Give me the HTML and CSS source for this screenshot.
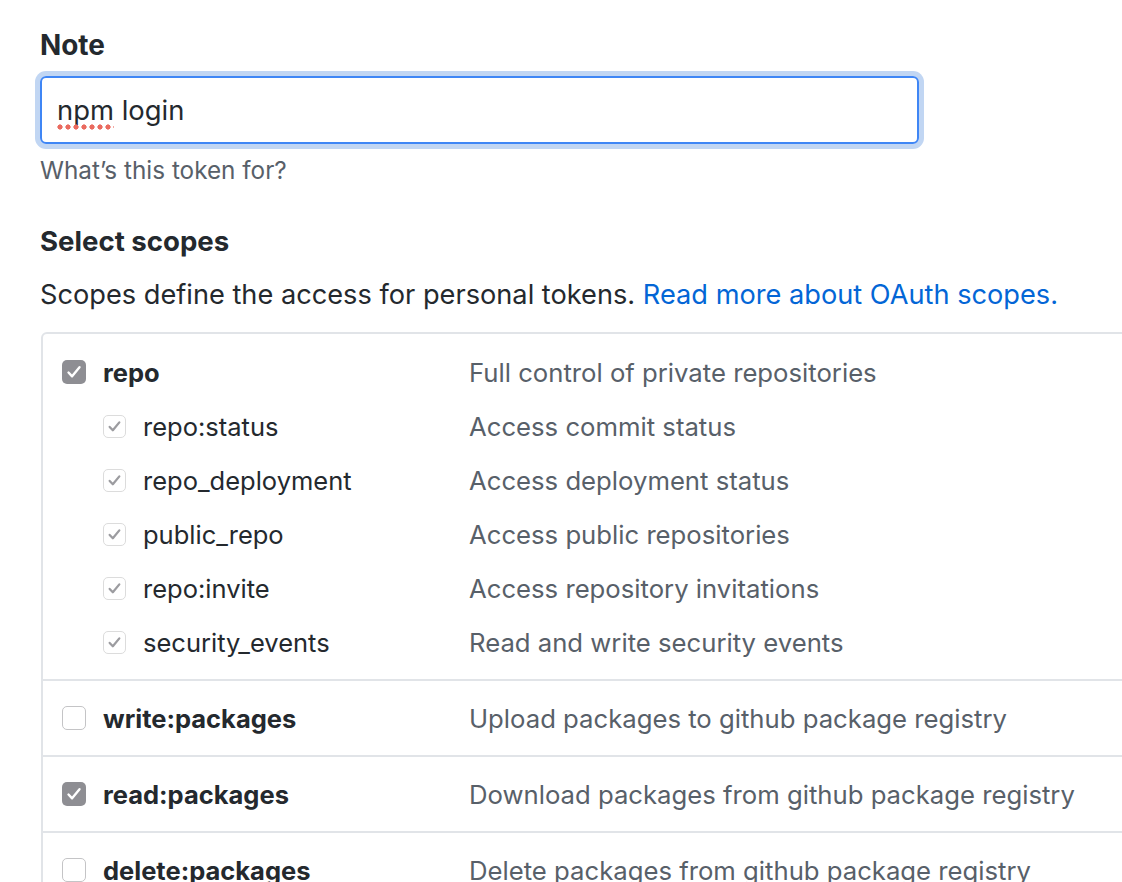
FILE: index.html
```html
<!DOCTYPE html>
<html>
<head>
<meta charset="utf-8">
<link rel="stylesheet" href="styles.css">
</head>
<body>
<div class="page">
  <div class="field">
    <div class="label">Note</div>
    <div class="input"><span class="typo">npm</span> login</div>
    <div class="hint">What’s this token for?</div>
  </div>
  <div class="scopes-head">Select scopes</div>
  <p class="intro">Scopes define the access for personal tokens. <a class="link" href="#">Read more about OAuth scopes.</a></p>
  <div class="box">
    <div class="group">
      <div class="row parent">
        <div class="name"><span class="cb cb-on"><svg viewBox="0 0 24 24"><path d="M6.5 12.5l3.6 3.8 7.4-9" /></svg></span><span class="strong">repo</span></div>
        <div class="desc">Full control of private repositories</div>
      </div>
      <div class="row child">
        <div class="name"><span class="cb cb-sub"><svg viewBox="0 0 24 24"><path d="M6.5 12.5l3.6 3.8 7.4-9" /></svg></span><span>repo:status</span></div>
        <div class="desc">Access commit status</div>
      </div>
      <div class="row child">
        <div class="name"><span class="cb cb-sub"><svg viewBox="0 0 24 24"><path d="M6.5 12.5l3.6 3.8 7.4-9" /></svg></span><span>repo_deployment</span></div>
        <div class="desc">Access deployment status</div>
      </div>
      <div class="row child">
        <div class="name"><span class="cb cb-sub"><svg viewBox="0 0 24 24"><path d="M6.5 12.5l3.6 3.8 7.4-9" /></svg></span><span>public_repo</span></div>
        <div class="desc">Access public repositories</div>
      </div>
      <div class="row child">
        <div class="name"><span class="cb cb-sub"><svg viewBox="0 0 24 24"><path d="M6.5 12.5l3.6 3.8 7.4-9" /></svg></span><span>repo:invite</span></div>
        <div class="desc">Access repository invitations</div>
      </div>
      <div class="row child">
        <div class="name"><span class="cb cb-sub"><svg viewBox="0 0 24 24"><path d="M6.5 12.5l3.6 3.8 7.4-9" /></svg></span><span>security_events</span></div>
        <div class="desc">Read and write security events</div>
      </div>
    </div>
    <div class="group single">
      <div class="row parent">
        <div class="name"><span class="cb cb-off"></span><span class="strong">write:packages</span></div>
        <div class="desc">Upload packages to github package registry</div>
      </div>
    </div>
    <div class="group single">
      <div class="row parent">
        <div class="name"><span class="cb cb-on"><svg viewBox="0 0 24 24"><path d="M6.5 12.5l3.6 3.8 7.4-9" /></svg></span><span class="strong">read:packages</span></div>
        <div class="desc">Download packages from github package registry</div>
      </div>
    </div>
    <div class="group single">
      <div class="row parent">
        <div class="name"><span class="cb cb-off"></span><span class="strong">delete:packages</span></div>
        <div class="desc">Delete packages from github package registry</div>
      </div>
    </div>
  </div>
</div>
</body>
</html>
```

FILE: styles.css
```css
html, body {
  margin: 0;
  padding: 0;
  background: #fff;
  overflow: hidden;
  height: 882px;
}
body {
  font-family: Inter, "Liberation Sans", sans-serif;
  color: #24292e;
  font-size: 25.5px;
}
.page {
  padding: 24px 0 0 40px;
  width: 1300px;
}
.label {
  font-weight: 700;
  font-size: 27.9px;
  line-height: 42px;
}
.input {
  margin-top: 10px;
  width: 879px;
  height: 68px;
  box-sizing: border-box;
  border: 2px solid #3f86f5;
  border-radius: 6px;
  box-shadow: 0 0 0 5px #c1d6f3;
  padding: 0 15px;
  font-size: 27.4px;
  line-height: 64px;
  white-space: pre;
}
.typo {
  position: relative;
}
.typo::after {
  content: "";
  position: absolute;
  left: 0;
  right: 0;
  bottom: -3px;
  height: 6px;
  background-image: radial-gradient(circle at 3px 3px, #ea6a5f 2.3px, transparent 2.9px);
  background-size: 8px 6px;
  background-repeat: repeat-x;
}
.hint {
  color: #586069;
  font-size: 24.3px;
  margin-top: 10px;
  line-height: 32px;
}
.scopes-head {
  font-weight: 700;
  font-size: 27.6px;
  margin-top: 35px;
  line-height: 40px;
}
.intro {
  margin: 14px 0 0;
  font-size: 27.2px;
  line-height: 40px;
}
.link {
  color: #0366d6;
  text-decoration: none;
}
.box {
  margin-top: 17px;
  margin-left: 1px;
  border: 2px solid #e1e4e8;
  border-radius: 6px;
  width: 1200px;
}
.group {
  padding: 11px 0 10px;
  border-bottom: 2px solid #e1e4e8;
}
.group.single {
  padding: 0;
}
.group.single .row {
  height: 74px;
}
.row {
  display: grid;
  grid-template-columns: 407px 1fr;
  align-items: center;
  height: 54px;
  padding-left: 19px;
}
.name {
  display: flex;
  align-items: center;
}
.child .name {
  padding-left: 41px;
}
.strong {
  font-weight: 700;
}
.desc {
  color: #586069;
  font-size: 25.7px;
}
.cb {
  flex: none;
  box-sizing: border-box;
  display: inline-flex;
  align-items: center;
  justify-content: center;
}
.cb svg {
  width: 100%;
  height: 100%;
  fill: none;
  stroke-width: 2.4;
  stroke-linecap: round;
  stroke-linejoin: round;
}
.cb-on {
  width: 24px;
  height: 24px;
  border-radius: 5px;
  background: #8e8e93;
  margin-right: 17px;
}
.cb-on svg {
  stroke: #fff;
}
.cb-off {
  width: 24px;
  height: 24px;
  border-radius: 5px;
  background: #fff;
  border: 1.5px solid #c4c4c6;
  margin-right: 17px;
}
.cb-sub {
  width: 23px;
  height: 23px;
  border-radius: 5px;
  background: #fff;
  border: 1.5px solid #dcdcdc;
  margin-right: 17px;
}
.cb-sub svg {
  stroke: #9c9ca0;
  stroke-width: 2.6;
}
```
